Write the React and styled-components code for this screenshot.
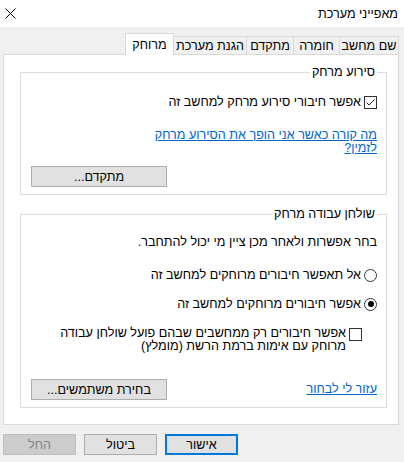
import React from "react";
import styled, { createGlobalStyle } from "styled-components";

const GlobalStyle = createGlobalStyle`
  html, body { margin: 0; padding: 0; }
  body {
    background: #f0f0f0;
    font-family: "Liberation Sans", "DejaVu Sans", sans-serif;
    font-size: 12.6px;
    color: #000;
  }
  #root { width: 404px; height: 462px; overflow: hidden; }
`;

const Dialog = styled.div`
  direction: rtl;
  width: 404px;
  height: 462px;
  display: flex;
  flex-direction: column;
  background: #f0f0f0;
`;

const TitleBar = styled.div`
  flex: none;
  height: 27px;
  box-sizing: border-box;
  padding: 0 6px 0 5px;
  background: #fff;
  display: flex;
  align-items: center;
  justify-content: space-between;
`;

const Title = styled.span`
  line-height: 14px;
`;

const CloseButton = styled.button`
  border: 0;
  background: none;
  padding: 0;
  width: 11px;
  height: 11px;
  display: flex;
`;

const TabStrip = styled.div`
  flex: none;
  position: relative;
  z-index: 1;
  height: 28px;
  margin-bottom: -1px;
  padding-right: 5px;
  display: flex;
  align-items: flex-end;
`;

const Tab = styled.div`
  box-sizing: border-box;
  width: ${(p) => p.$w}px;
  height: ${(p) => (p.$active ? 22 : 18)}px;
  margin-bottom: ${(p) => (p.$active ? 0 : 1)}px;
  border: 1px solid #d9d9d9;
  border-bottom: 0;
  background: ${(p) => (p.$active ? "#fff" : "#f0f0f0")};
  position: relative;
  z-index: ${(p) => (p.$active ? 2 : 1)};
  display: flex;
  align-items: center;
  justify-content: center;
  padding-top: ${(p) => (p.$active ? 0 : 1)}px;
  line-height: 14px;
  white-space: nowrap;
  & + & { margin-right: -1px; }
`;

const Panel = styled.div`
  flex: none;
  height: 371px;
  box-sizing: border-box;
  margin: 0 5px 0 3px;
  padding: 10px 11px 0 16px;
  background: #fff;
  border: 1px solid #d9d9d9;
  display: flex;
  flex-direction: column;
`;

const Group = styled.fieldset`
  margin: ${(p) => p.$top || 0}px 0 0 0;
  padding: 0 9px 7px 10px;
  border: 1px solid #dcdcdc;
  min-width: 0;
  display: flex;
  flex-direction: column;
`;

const Legend = styled.legend`
  padding: 0 2px;
  line-height: 14px;
`;

const Row = styled.div`
  display: flex;
  align-items: ${(p) => (p.$top ? "flex-start" : "center")};
  gap: 3px;
  margin-top: ${(p) => p.$mt || 0}px;
  margin-right: ${(p) => p.$indent || 0}px;
  line-height: ${(p) => (p.$top ? 13 : 14)}px;
`;

const Text = styled.div`
  margin-top: ${(p) => p.$mt || 0}px;
  line-height: 14px;
`;

const CheckBox = styled.span`
  flex: none;
  box-sizing: border-box;
  width: 13px;
  height: 13px;
  margin-top: ${(p) => p.$mt || 0}px;
  border: 1px solid #333;
  background: #fff;
  display: flex;
  align-items: center;
  justify-content: center;
`;

const Radio = styled.span`
  flex: none;
  box-sizing: border-box;
  width: 13px;
  height: 13px;
  border: 1px solid #333;
  border-radius: 50%;
  background: #fff;
  display: flex;
  align-items: center;
  justify-content: center;
  &::after {
    content: "";
    display: ${(p) => (p.$checked ? "block" : "none")};
    width: 6px;
    height: 6px;
    border-radius: 50%;
    background: #000;
  }
`;

const Link = styled.a`
  display: block;
  margin-top: ${(p) => p.$mt || 0}px;
  color: #0066cc;
  text-decoration: underline;
  line-height: 13px;
  cursor: pointer;
`;

const WideButton = styled.button`
  box-sizing: border-box;
  width: 136px;
  height: 21px;
  margin-top: ${(p) => p.$mt || 0}px;
  align-self: flex-end;
  padding: 0;
  font: inherit;
  color: #000;
  background: #e1e1e1;
  border: 1px solid #adadad;
`;

const BottomRow = styled.div`
  display: flex;
  align-items: center;
  justify-content: space-between;
  margin-top: ${(p) => p.$mt || 0}px;
`;

const ButtonBar = styled.div`
  flex: none;
  margin-top: 9px;
  padding-left: 3px;
  display: flex;
  justify-content: flex-end;
  gap: 8px;
`;

const DialogButton = styled.button`
  box-sizing: border-box;
  width: 73px;
  height: 21px;
  padding: 0;
  font: inherit;
  color: ${(p) => (p.disabled ? "#838383" : "#000")};
  background: ${(p) => (p.disabled ? "#cccccc" : "#e1e1e1")};
  border: ${(p) =>
    p.$primary ? "2px solid #0078d7" : p.disabled ? "1px solid #bfbfbf" : "1px solid #adadad"};
`;

const tabs = [
  { label: "שם מחשב", w: 60 },
  { label: "חומרה", w: 47 },
  { label: "מתקדם", w: 48 },
  { label: "הגנת מערכת", w: 74 },
  { label: "מרוחק", w: 49, active: true },
];

export default function App() {
  return (
    <>
      <GlobalStyle />
      <Dialog>
        <TitleBar>
          <Title>מאפייני מערכת</Title>
          <CloseButton aria-label="סגור">
            <svg width="11" height="11" viewBox="0 0 11 11">
              <path d="M0.5 0.5 L10.5 10.5 M10.5 0.5 L0.5 10.5" stroke="#000" strokeWidth="1" fill="none" />
            </svg>
          </CloseButton>
        </TitleBar>
        <TabStrip>
          {tabs.map((t) => (
            <Tab key={t.label} $w={t.w} $active={t.active}>
              {t.label}
            </Tab>
          ))}
        </TabStrip>
        <Panel>
          <Group>
            <Legend>סירוע מרחק</Legend>
            <Row $mt={16}>
              <CheckBox>
                <svg width="11" height="11" viewBox="0 0 11 11">
                  <polyline points="1.5,5.5 4,8 9.5,2.5" stroke="#222" strokeWidth="1" fill="none" />
                </svg>
              </CheckBox>
              <span>אפשר חיבורי סירוע מרחק למחשב זה</span>
            </Row>
            <Link $mt={20}>
              מה קורה כאשר אני הופך את הסירוע מרחק
              <br />
              לזמין?
            </Link>
            <WideButton $mt={11}>מתקדם...</WideButton>
          </Group>
          <Group $top={12}>
            <Legend>שולחן עבודה מרחק</Legend>
            <Text $mt={14}>בחר אפשרות ולאחר מכן ציין מי יכול להתחבר.</Text>
            <Row $mt={19}>
              <Radio />
              <span>אל תאפשר חיבורים מרוחקים למחשב זה</span>
            </Row>
            <Row $mt={15}>
              <Radio $checked />
              <span>אפשר חיבורים מרוחקים למחשב זה</span>
            </Row>
            <Row $mt={16} $indent={15} $top>
              <CheckBox $mt={1} />
              <span>
                אפשר חיבורים רק ממחשבים שבהם פועל שולחן עבודה
                <br />
                מרוחק עם אימות ברמת הרשת (מומלץ)
              </span>
            </Row>
            <BottomRow $mt={26}>
              <Link>עזור לי לבחור</Link>
              <WideButton>בחירת משתמשים...</WideButton>
            </BottomRow>
          </Group>
        </Panel>
        <ButtonBar>
          <DialogButton $primary>אישור</DialogButton>
          <DialogButton>ביטול</DialogButton>
          <DialogButton disabled>החל</DialogButton>
        </ButtonBar>
      </Dialog>
    </>
  );
}
